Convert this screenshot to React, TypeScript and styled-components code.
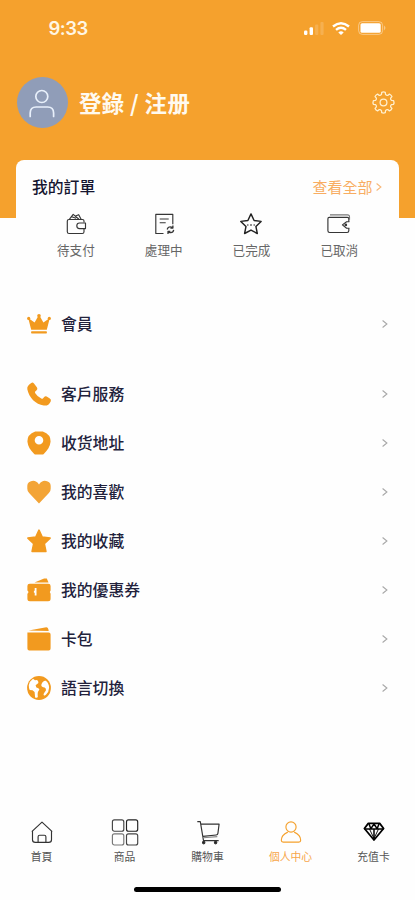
import React from "react";
import styled, { createGlobalStyle } from "styled-components";

const ORANGE = "#f5a12d";
const FILL = "#f29a1f";

const GlobalStyle = createGlobalStyle`
  * { box-sizing: border-box; }
  body {
    margin: 0;
    background: #fefefe;
    font-family: "Noto Sans CJK TC", "Noto Sans CJK SC", sans-serif;
  }
  svg { display: block; flex: none; overflow: visible; }
`;

const Screen = styled.div`
  width: 415px;
  height: 900px;
  display: flex;
  flex-direction: column;
  overflow: hidden;
  background: #fefefe;
`;

const Header = styled.header`
  height: 218px;
  flex: none;
  background: ${ORANGE};
`;

const StatusBar = styled.div`
  height: 56px;
  display: flex;
  align-items: center;
  justify-content: space-between;
  padding: 0 28px 0 48.5px;
`;

const Clock = styled.span`
  font: 600 18.5px/24px Inter, sans-serif;
  letter-spacing: -0.5px;
  color: #fff6e4;
`;

const StatusIcons = styled.div`
  display: flex;
  align-items: center;
  gap: 8px;
`;

const Profile = styled.div`
  height: 93px;
  display: flex;
  align-items: center;
  padding: 0 20.5px 0 16.5px;
`;

const Avatar = styled.div`
  width: 51px;
  height: 51px;
  border-radius: 50%;
  background: #909db8;
  display: flex;
  align-items: center;
  justify-content: center;
`;

const LoginText = styled.span`
  flex: 1;
  margin-left: 11.5px;
  padding-bottom: 1px;
  font-size: 22.4px;
  line-height: 30px;
  font-weight: 700;
  letter-spacing: 0.4px;
  color: #fffaf0;
  white-space: pre;
`;

const OrderCard = styled.section`
  flex: none;
  height: 128px;
  margin: -58px 16px 0 16px;
  padding: 15.5px 16px 0;
  border-radius: 8px;
  background: #fefefe;
`;

const CardTop = styled.div`
  height: 22px;
  display: flex;
  align-items: center;
  justify-content: space-between;
`;

const CardTitle = styled.h2`
  margin: 0;
  font-size: 15.8px;
  line-height: 22px;
  font-weight: 500;
  color: #15152f;
`;

const ViewAll = styled.span`
  display: flex;
  align-items: center;
  gap: 4px;
  padding-right: 1px;
  font-size: 15px;
  line-height: 22px;
  color: #f8ad62;
`;

const Statuses = styled.div`
  display: grid;
  grid-template-columns: repeat(4, 87.8px);
  margin-top: 14.5px;
`;

const Status = styled.div`
  display: flex;
  flex-direction: column;
  align-items: center;
  gap: 5px;
  font-size: 12.6px;
  line-height: 18px;
  color: #666;
`;

const Menu = styled.nav<{ $top: number }>`
  flex: none;
  margin-top: ${(p) => p.$top}px;
`;

const MenuRow = styled.div`
  height: 49px;
  display: flex;
  align-items: center;
  padding: 0 27.5px 0 26.5px;
`;

const MenuLabel = styled.span`
  flex: 1;
  margin-left: 10.5px;
  font-size: 15.8px;
  line-height: 22px;
  font-weight: 500;
  color: #22223c;
`;

const TabBar = styled.nav`
  margin-top: auto;
  height: 62px;
  flex: none;
  display: grid;
  grid-template-columns: repeat(5, 1fr);
`;

const Tab = styled.div<{ $active?: boolean }>`
  display: flex;
  flex-direction: column;
  align-items: center;
  gap: 2px;
  font-size: 10.8px;
  line-height: 16px;
  color: ${(p) => (p.$active ? "#f7a64b" : "#555")};
`;

const HomeArea = styled.div`
  height: 20px;
  flex: none;
  display: flex;
  justify-content: center;
  padding-top: 6.5px;
`;

const HomeIndicator = styled.div`
  width: 147px;
  height: 5px;
  border-radius: 3px;
  background: #000;
`;

const Chevron = ({ color = "#a8a8a8", size = 8 }: { color?: string; size?: number }) => (
  <svg width={size * 0.7} height={size} viewBox="0 0 5.6 8" fill="none" stroke={color} strokeWidth="1.1">
    <path d="M.6.5 4.9 4 .6 7.5" />
  </svg>
);

const gearPath = (() => {
  const parts: string[] = [];
  for (let i = 0; i < 8; i++) {
    const at = (r: number, deg: number) => {
      const a = ((i * 45 + deg - 90) * Math.PI) / 180;
      return `${(11.5 + r * Math.cos(a)).toFixed(2)} ${(11.5 + r * Math.sin(a)).toFixed(2)}`;
    };
    parts.push(`${i ? "L" : "M"}${at(8.3, -14)}L${at(10.3, -10)}Q${at(10.9, 0)} ${at(10.3, 10)}L${at(8.3, 14)}Q${at(7.5, 22.5)} ${at(8.3, 31)}`);
  }
  return parts.join("") + "Z";
})();

const Gear = () => (
  <svg width="23" height="23" viewBox="0 0 23 23" fill="none" stroke="#fff0cf" strokeWidth="1.25" strokeLinejoin="round">
    <path d={gearPath} />
    <circle cx="11.5" cy="11.5" r="3.4" />
  </svg>
);

const Person = () => (
  <svg width="26" height="28" viewBox="0 0 26 28" fill="none" stroke="#e8f0fb" strokeWidth="1.7" strokeLinecap="round">
    <circle cx="12.8" cy="7.5" r="6" />
    <path d="M1.2 27.5V24q0-6 6-6h11.4q6 0 6 6v3.5" />
  </svg>
);

const Signal = () => (
  <svg width="20" height="13" viewBox="0 0 20 13" fill="#fff">
    <rect x="0" y="8.5" width="3.4" height="4.5" rx="1.2" />
    <rect x="5.6" y="5.2" width="3.4" height="7.8" rx="1.1" />
    <rect x="11.1" y="2.5" width="3.2" height="10.5" rx="1" opacity=".17" />
    <rect x="16.4" y="0" width="3.2" height="13" rx="1" opacity=".17" />
  </svg>
);

const Wifi = () => (
  <svg width="18" height="13" viewBox="0 0 18 13" fill="none" stroke="#fff" strokeWidth="2.4">
    <path d="M1 4.5Q9-2.2 17 4.5" />
    <path d="M4 7.9q5-4.1 10 0" />
    <path d="M6.3 10.4q2.7-2.2 5.4 0L9 13Z" fill="#fff" stroke="none" />
  </svg>
);

const Battery = () => (
  <svg width="29" height="14" viewBox="0 0 29 14">
    <rect x=".6" y=".6" width="24" height="12.8" rx="3.8" fill="none" stroke="#fff" opacity=".42" />
    <rect x="2.5" y="2.2" width="20.2" height="9.6" rx="1.6" fill="#fff" />
    <path d="M26.2 4.6q2.4 2.4 0 4.8Z" fill="#fff" opacity=".5" />
  </svg>
);

const statusProps = { width: 24, height: 24, viewBox: "0 0 24 24", fill: "none", stroke: "#363636", strokeWidth: 1.15, strokeLinejoin: "round" as const };

const PayIcon = () => (
  <svg {...statusProps}>
    <path d="M20 10.4V9q0-1.5-1.5-1.5H5Q3.3 7.5 3.3 9v10.7q0 1.8 1.8 1.8h13.2q1.7 0 1.7-1.8V17" />
    <path d="M21.5 11h-6q-2.7 0-2.7 2.8t2.7 2.8h6Z" />
    <path d="m5.5 7.2 3.7-4.8 5.7 4.8M11.5 4l3.2-1.3 2.4 4.5M7.6 4.7l4.5 1.5" />
  </svg>
);
const ProcessIcon = () => (
  <svg {...statusProps}>
    <path d="M11.5 21.5H3.8V2.3h17v10M7.7 7h9M7.7 10.7h6" />
    <path d="M15.2 17.5q.8-3.3 4.2-2.4l1.5.8m0-2.3v2.5h-2.5M21.7 17.9q-.7 3.3-4.1 2.6L16 19.6m0 2.3v-2.5h2.4" strokeWidth="1.3" />
  </svg>
);
const DoneIcon = () => (
  <svg {...statusProps} stroke="#222" strokeWidth="1.45">
    <path d="m12 1.9 3.1 6.6 7 .9-5.2 5 1.4 7.1L12 18.1l-6.4 3.4L7 14.4 1.8 9.4l7.1-.9Z" />
    <path d="M8 13h1.5m1.5 0h2m1.5 0H16" strokeWidth="1" />
  </svg>
);
const CancelIcon = () => (
  <svg {...statusProps}>
    <path d="M21.8 9.8V6.7q0-1.3-1.4-1.3H2.2q-1.3 0-1.3 1.4v12q0 1.7 1.7 1.7h17.5q1.7 0 1.7-1.7v-2.5" />
    <path d="M3 2.8h17.5q2 0 2 2v3" stroke="#777" />
    <path d="M22.4 9.7h-2.8l-4.2 3.2 4.2 3.3h2.8" />
    <circle cx="18.8" cy="12.9" r=".8" fill="#222" />
  </svg>
);

const menuProps = { width: 24, height: 24, viewBox: "0 0 24 24", fill: FILL };
const Crown = () => (
  <svg {...menuProps}>
    <path d="m1.2 6.1 6.4 4.3L11 4.4h2l3.4 6L22.8 6.1l-3 11.7H4.2Z" />
    <circle cx="12" cy="3.8" r="1.8" /><circle cx="1.7" cy="6.4" r="1.6" /><circle cx="22.3" cy="6.4" r="1.6" />
    <rect x="4.1" y="19.2" width="15.8" height="2.2" rx=".7" />
  </svg>
);
const Phone = () => (
  <svg {...menuProps}>
    <path d="M4.3.9q1.4-.9 2.7.6l3 3.9q1 1.4-.4 2.8L8.2 9.5q-.6.7.1 1.7 2.2 3.6 6 5.4 1 .5 1.6-.2l1.3-1.5q1.1-1.2 2.5-.3l3.1 1.8q1.8 1.1.9 3-2.1 4.7-6.9 4.1C8.6 22.3 2.1 15.7.3 7.2-.2 4.4 1.8 2.6 4.3.9Z" />
  </svg>
);
const Pin = () => (
  <svg {...menuProps}>
    <path fillRule="evenodd" d="M8.2.4h7.6q8.2 3 7.8 10.2c-.4 5-3.1 8.8-6.6 12.2-.5.6-1.2.8-2 .8H9c-.8 0-1.5-.2-2-.8C3.5 19.4.8 15.6.4 10.6Q0 3.4 8.2.4ZM12 5a4.3 4.3 0 1 0 0 8.6A4.3 4.3 0 1 0 12 5Z" />
  </svg>
);
const Heart = () => (
  <svg {...menuProps} fill="#f3a436">
    <path d="M6.1.8q3.5 0 5.9 3.7Q14.4.8 17.9.8q2.2 0 4.2 1.5 1.6 1.2 1.6 3.4v3q0 2.5-1.8 4.3L12 23.4 2.1 13Q.3 11.2.3 8.7v-3q0-2.2 1.6-3.4Q3.9.8 6.1.8Z" />
  </svg>
);
const StarFill = () => (
  <svg {...menuProps} stroke={FILL} strokeWidth="1.6" strokeLinejoin="round">
    <path d="m12 1.2 3.2 6.9 7.9 1-5.8 5.6 1.6 7.7H5.1l1.6-7.7L.9 9.1l7.9-1Z" />
  </svg>
);
const Coupon = () => (
  <svg {...menuProps}>
    <path fillRule="evenodd" d="M2.7 5.8h18.5q2.4 0 2.4 2.2v4.5q-1.6 1.6 0 3.3v5q0 2.5-2.5 2.5H2.9Q.4 23.3.4 20.8v-5q2-1.7 0-3.3V8q0-2.2 2.3-2.2Zm5 4.2v2.8h-.8v2h.8v2.8h1.8V10Z" />
    <path d="m7.5 4.5 9.6-4.1h2.7l1.7 4.1Z" />
  </svg>
);
const Wallet = () => (
  <svg {...menuProps}>
    <path d="M.4 5.4h21.3q1.9 0 1.9 2v14q0 2-2 2H2.3q-1.9 0-1.9-2ZM1.7 3.4 19.3.3q2.1 0 2.4 3.8Z" />
  </svg>
);
const Globe = () => (
  <svg {...menuProps}>
    <circle cx="12" cy="12" r="11.9" />
    <path fill="#fff" d="M6 2.7Q2.6 5 1.8 9.3q0 3.5.9 4.8l2.8.1 2.1 1.7.5 5.6q2.2.7 2.7-.5-.4-3.2.1-5l1.5-2.4q-.5-2-3-2.2l-.8-2.2 2.8-2.1q.1-2.4-1.5-3.1L8 4.2Z" />
    <path fill="#fff" d="M14.4 8.4q1.6-4.1 4.4-3.6 3.2 2.4 3.3 6.9-.1 4.2-3.2 7-2.7 2-2.3-.6.9-2 2.3-3.5.5-2.4-1.2-3.2-2.2.2-3.3-1.4Z" />
  </svg>
);

const tabProps = { width: 28, height: 28, viewBox: "0 0 28 28", fill: "none", stroke: "#333", strokeWidth: 1.15, strokeLinejoin: "round" as const };
const Home = () => (
  <svg {...tabProps}>
    <path d="M4.5 13.2v8.5q0 2.7 2.8 2.7h13.4q2.8 0 2.8-2.7v-8.5M3.8 13.7 14 4.2l10.2 9.5M10.1 24.3v-5.6q0-1.5 1.5-1.5h4.8q1.5 0 1.5 1.5v5.6" />
  </svg>
);
const Products = () => (
  <svg {...tabProps} stroke="#444">
    <rect x="1.4" y="1.9" width="11.4" height="11.3" rx="2" /><rect x="15.5" y="1.9" width="11.2" height="11.3" rx="2" stroke="#222" />
    <rect x="1.4" y="15.8" width="11.4" height="11.2" rx="2" stroke="#777" /><rect x="15.5" y="15.8" width="11.2" height="11.2" rx="2" />
  </svg>
);
const Cart = () => (
  <svg {...tabProps}>
    <path d="M3.3 3.6h3l3.2 19h15.2M7 6.1h18.1l-1.2 9.3q-.2 1.5-1.7 1.6L9 18.4" />
    <path d="m9.3 19.7 14-1.1" stroke="#888" />
    <g fill="#222"><circle cx="9.7" cy="24.6" r="1.2" /><circle cx="21.6" cy="24.6" r="1.2" /></g>
  </svg>
);
const UserTab = () => (
  <svg {...tabProps} stroke={ORANGE}>
    <circle cx="14" cy="9" r="5.1" />
    <path d="M10.8 14.1Q4.3 17 4.3 22.2q0 1.9 1.9 1.9h15.6q1.9 0 1.9-1.9 0-5.2-6.5-8.1" />
  </svg>
);
const Diamond = () => (
  <svg {...tabProps} stroke="#000" strokeWidth="1.8">
    <path d="M8.3 5.4h11.4l3.9 5.1L14 22 4.4 10.5Z" />
    <path d="M4.4 11h19.2M9 6l1.9 4.7L14 6l3.1 4.7L19 6M14 11v10" strokeWidth="1.5" />
    <path d="m9.5 11 4.5 9.5 4.5-9.5" strokeWidth=".9" />
  </svg>
);

const statuses = [
  { label: "待支付", Icon: PayIcon },
  { label: "處理中", Icon: ProcessIcon },
  { label: "已完成", Icon: DoneIcon },
  { label: "已取消", Icon: CancelIcon },
];
const memberItems = [{ label: "會員", Icon: Crown }];
const serviceItems = [
  { label: "客戶服務", Icon: Phone },
  { label: "收货地址", Icon: Pin },
  { label: "我的喜歡", Icon: Heart },
  { label: "我的收藏", Icon: StarFill },
  { label: "我的優惠券", Icon: Coupon },
  { label: "卡包", Icon: Wallet },
  { label: "語言切換", Icon: Globe },
];
const tabs = [
  { label: "首頁", Icon: Home },
  { label: "商品", Icon: Products },
  { label: "購物車", Icon: Cart },
  { label: "個人中心", Icon: UserTab, active: true },
  { label: "充值卡", Icon: Diamond },
];

const MenuList = ({ items, top }: { items: typeof serviceItems; top: number }) => (
  <Menu $top={top}>
    {items.map(({ label, Icon }) => (
      <MenuRow key={label}>
        <Icon />
        <MenuLabel>{label}</MenuLabel>
        <Chevron />
      </MenuRow>
    ))}
  </Menu>
);

export default function App() {
  return (
    <>
      <GlobalStyle />
      <Screen>
        <Header>
          <StatusBar>
            <Clock>9:33</Clock>
            <StatusIcons>
              <Signal />
              <Wifi />
              <Battery />
            </StatusIcons>
          </StatusBar>
          <Profile>
            <Avatar><Person /></Avatar>
            <LoginText>登錄 / 注册</LoginText>
            <Gear />
          </Profile>
        </Header>
        <OrderCard>
          <CardTop>
            <CardTitle>我的訂單</CardTitle>
            <ViewAll>查看全部<Chevron color="#f8b779" size={8} /></ViewAll>
          </CardTop>
          <Statuses>
            {statuses.map(({ label, Icon }) => (
              <Status key={label}><Icon />{label}</Status>
            ))}
          </Statuses>
        </OrderCard>
        <MenuList items={memberItems} top={11} />
        <MenuList items={serviceItems} top={21.5} />
        <TabBar>
          {tabs.map(({ label, Icon, active }) => (
            <Tab key={label} $active={active}><Icon />{label}</Tab>
          ))}
        </TabBar>
        <HomeArea><HomeIndicator /></HomeArea>
      </Screen>
    </>
  );
}
